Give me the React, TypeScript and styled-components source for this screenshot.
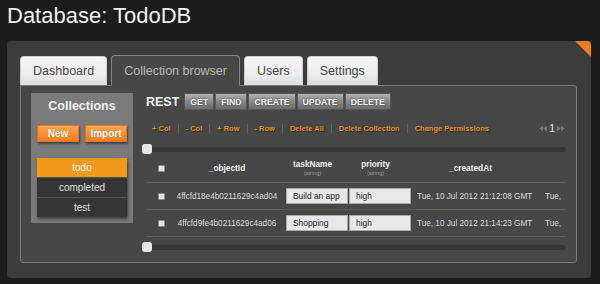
import React from 'react'
import styled, { createGlobalStyle } from 'styled-components'

const GlobalStyle = createGlobalStyle`
  html, body {
    margin: 0;
    padding: 0;
    background: #1c1c1c;
  }
  body {
    width: 600px;
    height: 284px;
    overflow: hidden;
    font-family: 'Liberation Sans', Arial, sans-serif;
  }
`

const Page = styled.div`
  padding: 3px 9px 0 7px;
`

const Title = styled.h1`
  margin: 0;
  font-size: 22px;
  line-height: 25px;
  font-weight: normal;
  color: #f2f2f2;
`

const Panel = styled.section`
  position: relative;
  margin-top: 13px;
  padding: 15px 14px 15px 13px;
  background: #3c3c3c;
  border-radius: 4px;
  overflow: hidden;
`

const Corner = styled.div`
  position: absolute;
  top: 0;
  right: 0;
  width: 0;
  height: 0;
  border-top: 16px solid #f07c1d;
  border-left: 16px solid transparent;
`

const TabBar = styled.nav`
  display: flex;
  align-items: flex-end;
  gap: 4px;
  height: 30px;
  margin-bottom: -1px;
`

const Tab = styled.div<{ $active?: boolean }>`
  position: relative;
  z-index: ${(p) => (p.$active ? 1 : 0)};
  box-sizing: border-box;
  height: ${(p) => (p.$active ? '31px' : '29px')};
  margin-bottom: ${(p) => (p.$active ? '0' : '1px')};
  padding: 0 12px;
  display: flex;
  align-items: center;
  font-size: 12.5px;
  border-radius: 4px 4px 0 0;
  color: ${(p) => (p.$active ? '#b8b8b8' : '#474747')};
  background: ${(p) =>
    p.$active ? '#474747' : 'linear-gradient(#f6f6f6, #ececec 60%, #dedede)'};
  border: 1px solid ${(p) => (p.$active ? '#858585' : '#cfcfcf')};
  border-bottom: ${(p) => (p.$active ? '1px solid #474747' : 'none')};
`

const Content = styled.div`
  box-sizing: border-box;
  height: 178px;
  display: flex;
  padding: 7px 10px;
  background: #474747;
  border: 1px solid #7d7d7d;
  border-radius: 0 3px 3px 3px;
`

const Sidebar = styled.aside`
  box-sizing: border-box;
  width: 102px;
  height: 130px;
  padding: 6px 6px 0;
  background: #7a7a7a;
  display: flex;
  flex-direction: column;
`

const SideTitle = styled.h2`
  margin: 0;
  font-size: 12.5px;
  line-height: 15px;
  font-weight: bold;
  text-align: center;
  color: #f0f0f0;
`

const ButtonPair = styled.div`
  display: flex;
  gap: 6px;
  margin-top: 11px;
`

const OrangeButton = styled.button`
  box-sizing: border-box;
  width: 42px;
  height: 17px;
  padding: 0;
  font-family: inherit;
  font-size: 10px;
  font-weight: bold;
  color: #fff;
  background: linear-gradient(#ffa54b, #f27e1f);
  border: 1px solid #e2741a;
  box-shadow: 1px 2px 2px rgba(0, 0, 0, 0.45);
  text-shadow: 0 0 1px rgba(120, 50, 0, 0.6);
`

const CollectionList = styled.ul`
  margin: 16px 0 0;
  padding: 0;
  list-style: none;
  box-shadow: 1px 2px 3px rgba(0, 0, 0, 0.5);
`

const CollectionItem = styled.li<{ $active?: boolean }>`
  height: 19px;
  line-height: 19px;
  text-align: center;
  font-size: 10px;
  color: ${(p) => (p.$active ? '#f4f4f4' : '#e0e0e0')};
  background: ${(p) => (p.$active ? '#f29a1c' : '#353535')};
  & + & {
    border-top: 1px solid #555;
  }
`

const Main = styled.div`
  width: 420px;
  margin-left: 13px;
  display: flex;
  flex-direction: column;
`

const RestRow = styled.div`
  display: flex;
  align-items: center;
  gap: 1px;
  height: 17px;
`

const RestLabel = styled.span`
  font-size: 12.5px;
  font-weight: bold;
  color: #f4f4f4;
  margin-right: 4px;
`

const GrayButton = styled.button`
  box-sizing: border-box;
  height: 17px;
  padding: 0 5px;
  font-family: inherit;
  font-size: 8.7px;
  font-weight: bold;
  color: #f4f4f4;
  background: linear-gradient(#b0b0b0, #858585 55%, #6c6c6c);
  border: 1px solid #575757;
  text-shadow: 0 0 2px #333;
`

const ActionRow = styled.div`
  display: flex;
  align-items: center;
  height: 14px;
  margin-top: 11px;
  padding-left: 6px;
`

const ActionLink = styled.span`
  font-size: 7.5px;
  font-weight: bold;
  color: #e8930c;
  text-shadow: 1px 1px 0 #262626;
`

const Sep = styled.span`
  width: 1px;
  height: 9px;
  margin: 0 7px;
  background: #616161;
`

const Pager = styled.div`
  margin-left: auto;
  margin-right: 1px;
  display: flex;
  align-items: center;
  gap: 2px;
`

const PageNum = styled.span`
  font-size: 10.5px;
  color: #e6eef6;
`

const Slider = styled.div<{ $gap: number }>`
  position: relative;
  height: 10px;
  margin-top: ${(p) => p.$gap}px;
  display: flex;
  align-items: center;
`

const Track = styled.div`
  flex: 1;
  height: 5px;
  border-radius: 3px;
  background: #353535;
`

const Thumb = styled.div`
  position: absolute;
  left: -4px;
  top: 0;
  width: 10px;
  height: 10px;
  border-radius: 3px;
  background: #e6e6e6;
`

const TableView = styled.div`
  width: 420px;
  overflow: hidden;
`

const Row = styled.div<{ $head?: boolean }>`
  display: grid;
  grid-template-columns: 22px 118px 63px 63px 128px 30px;
  width: 424px;
  height: ${(p) => (p.$head ? '28px' : '26px')};
  align-items: center;
  border-bottom: 1px solid #5e5e5e;
`

const Check = styled.span`
  display: block;
  box-sizing: border-box;
  width: 7px;
  height: 7px;
  margin-left: 12px;
  background: #e4e4e4;
  border: 1px solid #8d8d8d;
  border-radius: 1px;
`

const HeadCell = styled.div<{ $pad?: number }>`
  display: flex;
  flex-direction: column;
  align-items: center;
  padding-right: ${(p) => p.$pad ?? 0}px;
  color: #f0f0f0;
  font-size: 8.3px;
  font-weight: bold;
  line-height: 10px;
`

const TypeHint = styled.span`
  font-size: 5.5px;
  font-weight: normal;
  line-height: 8px;
  color: #9a9a9a;
`

const Cell = styled.div<{ $center?: boolean }>`
  font-size: 8.2px;
  color: #dcdcdc;
  white-space: nowrap;
  text-align: ${(p) => (p.$center ? 'center' : 'left')};
  padding-left: ${(p) => (p.$center ? '0' : '5px')};
`

const ValueBox = styled.div`
  box-sizing: border-box;
  width: 62px;
  height: 16px;
  padding-left: 6px;
  line-height: 14px;
  font-size: 8.4px;
  color: #222;
  background: #e8e8e8;
  border: 1px solid #a9a9a9;
`

const Arrows = ({ dir }: { dir: 'left' | 'right' }) => (
  <svg width="8" height="5" viewBox="0 0 8 5">
    {dir === 'left' ? (
      <path d="M0 2.5L4 0v5zM4 2.5L8 0v5z" fill="#7c7c7c" />
    ) : (
      <path d="M0 0l4 2.5L0 5zM4 0l4 2.5L4 5z" fill="#7c7c7c" />
    )}
  </svg>
)

const actions = ['+ Col', '- Col', '+ Row', '- Row', 'Delete All', 'Delete Collection', 'Change Permissions']

const docs = [
  { id: '4ffcfd18e4b0211629c4ad04', task: 'Build an app', priority: 'high', created: 'Tue, 10 Jul 2012 21:12:08 GMT' },
  { id: '4ffcfd9fe4b0211629c4ad06', task: 'Shopping', priority: 'high', created: 'Tue, 10 Jul 2012 21:14:23 GMT' },
]

export default function App() {
  return (
    <Page>
      <GlobalStyle />
      <Title>Database: TodoDB</Title>
      <Panel>
        <Corner />
        <TabBar>
          <Tab>Dashboard</Tab>
          <Tab $active>Collection browser</Tab>
          <Tab>Users</Tab>
          <Tab>Settings</Tab>
        </TabBar>
        <Content>
          <Sidebar>
            <SideTitle>Collections</SideTitle>
            <ButtonPair>
              <OrangeButton>New</OrangeButton>
              <OrangeButton>Import</OrangeButton>
            </ButtonPair>
            <CollectionList>
              <CollectionItem $active>todo</CollectionItem>
              <CollectionItem>completed</CollectionItem>
              <CollectionItem>test</CollectionItem>
            </CollectionList>
          </Sidebar>
          <Main>
            <RestRow>
              <RestLabel>REST</RestLabel>
              <GrayButton>GET</GrayButton>
              <GrayButton>FIND</GrayButton>
              <GrayButton>CREATE</GrayButton>
              <GrayButton>UPDATE</GrayButton>
              <GrayButton>DELETE</GrayButton>
            </RestRow>
            <ActionRow>
              {actions.map((a, i) => (
                <React.Fragment key={a}>
                  {i > 0 && <Sep />}
                  <ActionLink>{a}</ActionLink>
                </React.Fragment>
              ))}
              <Pager>
                <Arrows dir="left" />
                <PageNum>1</PageNum>
                <Arrows dir="right" />
              </Pager>
            </ActionRow>
            <Slider $gap={9}>
              <Track />
              <Thumb />
            </Slider>
            <TableView>
              <Row $head>
                <Check />
                <HeadCell>_objectId</HeadCell>
                <HeadCell $pad={10}>
                  taskName
                  <TypeHint>(string)</TypeHint>
                </HeadCell>
                <HeadCell $pad={10}>
                  priority
                  <TypeHint>(string)</TypeHint>
                </HeadCell>
                <HeadCell $pad={11}>_createdAt</HeadCell>
                <HeadCell />
              </Row>
              {docs.map((d) => (
                <Row key={d.id}>
                  <Check />
                  <Cell $center>{d.id}</Cell>
                  <ValueBox>{d.task}</ValueBox>
                  <ValueBox>{d.priority}</ValueBox>
                  <Cell>{d.created}</Cell>
                  <Cell>Tue,</Cell>
                </Row>
              ))}
            </TableView>
            <Slider $gap={5}>
              <Track />
              <Thumb />
            </Slider>
          </Main>
        </Content>
      </Panel>
    </Page>
  )
}
